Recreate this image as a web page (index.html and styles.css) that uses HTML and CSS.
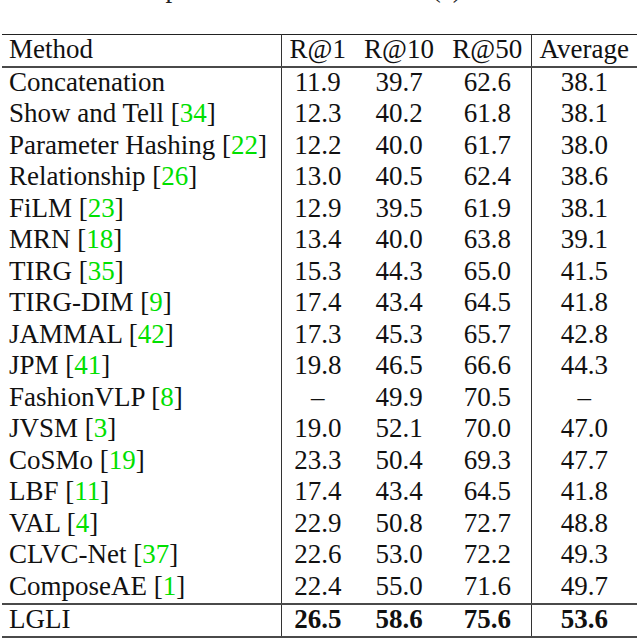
FILE: index.html
```html
<!DOCTYPE html>
<html>
<head>
<meta charset="utf-8">
<link rel="stylesheet" href="styles.css">
</head>
<body>
<div class="caption">Comparison on Fashion200k (a)</div>
<table class="results">
  <colgroup>
    <col class="c-method"><col class="c-r1"><col class="c-r10"><col class="c-r50"><col class="c-avg">
  </colgroup>
  <thead>
    <tr><th>Method</th><th>R@1</th><th>R@10</th><th>R@50</th><th>Average</th></tr>
  </thead>
  <tbody>
    <tr><td>Concatenation</td><td>11.9</td><td>39.7</td><td>62.6</td><td>38.1</td></tr>
    <tr><td>Show and Tell [<span class="cite">34</span>]</td><td>12.3</td><td>40.2</td><td>61.8</td><td>38.1</td></tr>
    <tr><td>Parameter Hashing [<span class="cite">22</span>]</td><td>12.2</td><td>40.0</td><td>61.7</td><td>38.0</td></tr>
    <tr><td>Relationship [<span class="cite">26</span>]</td><td>13.0</td><td>40.5</td><td>62.4</td><td>38.6</td></tr>
    <tr><td>FiLM [<span class="cite">23</span>]</td><td>12.9</td><td>39.5</td><td>61.9</td><td>38.1</td></tr>
    <tr><td>MRN [<span class="cite">18</span>]</td><td>13.4</td><td>40.0</td><td>63.8</td><td>39.1</td></tr>
    <tr><td>TIRG [<span class="cite">35</span>]</td><td>15.3</td><td>44.3</td><td>65.0</td><td>41.5</td></tr>
    <tr><td>TIRG-DIM [<span class="cite">9</span>]</td><td>17.4</td><td>43.4</td><td>64.5</td><td>41.8</td></tr>
    <tr><td>JAMMAL [<span class="cite">42</span>]</td><td>17.3</td><td>45.3</td><td>65.7</td><td>42.8</td></tr>
    <tr><td>JPM [<span class="cite">41</span>]</td><td>19.8</td><td>46.5</td><td>66.6</td><td>44.3</td></tr>
    <tr><td>FashionVLP [<span class="cite">8</span>]</td><td>–</td><td>49.9</td><td>70.5</td><td>–</td></tr>
    <tr><td>JVSM [<span class="cite">3</span>]</td><td>19.0</td><td>52.1</td><td>70.0</td><td>47.0</td></tr>
    <tr><td>CoSMo [<span class="cite">19</span>]</td><td>23.3</td><td>50.4</td><td>69.3</td><td>47.7</td></tr>
    <tr><td>LBF [<span class="cite">11</span>]</td><td>17.4</td><td>43.4</td><td>64.5</td><td>41.8</td></tr>
    <tr><td>VAL [<span class="cite">4</span>]</td><td>22.9</td><td>50.8</td><td>72.7</td><td>48.8</td></tr>
    <tr><td>CLVC-Net [<span class="cite">37</span>]</td><td>22.6</td><td>53.0</td><td>72.2</td><td>49.3</td></tr>
    <tr><td>ComposeAE [<span class="cite">1</span>]</td><td>22.4</td><td>55.0</td><td>71.6</td><td>49.7</td></tr>
    <tr class="ours"><td>LGLI</td><td class="best">26.5</td><td class="best">58.6</td><td class="best">75.6</td><td class="best">53.6</td></tr>
  </tbody>
</table>
</body>
</html>
```

FILE: styles.css
```css
html, body {
  margin: 0;
  padding: 0;
  background: #ffffff;
}

body {
  font-family: "Liberation Serif", "Tinos", "Times New Roman", Times, "DejaVu Serif", serif;
  font-size: 27px;
  color: #111111;
  overflow: hidden;
}

.caption {
  margin-top: -27px;
  height: 30px;
  line-height: 30px;
  padding-left: 113px;
  white-space: nowrap;
  color: #222222;
}

.results {
  margin: 31px 0 0 2px;
  width: 635px;
  table-layout: fixed;
  border-collapse: collapse;
  border-top: 1px solid #222222;
  border-bottom: 2px solid #4a4a4a;
  font-family: "Liberation Serif", "Tinos", "Times New Roman", Times, "DejaVu Serif", serif;
}

.c-method { width: 279px; }
.c-r1 { width: 73px; }
.c-r10 { width: 90px; }
.c-r50 { width: 87px; }
.c-avg { width: 106px; }

.results th,
.results td {
  font-weight: normal;
  padding: 0 0 3px 0;
  text-align: center;
  white-space: nowrap;
  line-height: 28px;
}

.results tr {
  height: 31.5px;
}

.results th:first-child,
.results td:first-child {
  text-align: left;
  padding-left: 7px;
  border-right: 1px solid #333333;
}

.results th:nth-child(4),
.results td:nth-child(4) {
  border-right: 1px solid #333333;
}

.results thead tr {
  border-bottom: 2px solid #4a4a4a;
}

.results tr.ours {
  border-top: 2px solid #4a4a4a;
}

.results .cite {
  color: #00e000;
}

.results td.best {
  font-weight: bold;
}
```
